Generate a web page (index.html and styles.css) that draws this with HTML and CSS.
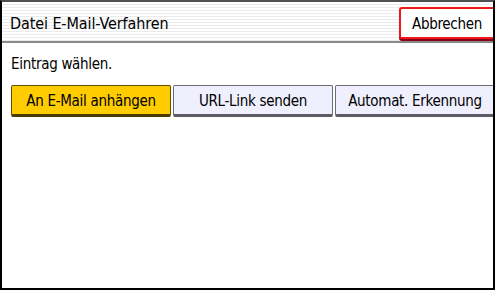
FILE: index.html
```html
<!DOCTYPE html>
<html lang="de">

<head>
  <meta charset="UTF-8" />
  <meta name="viewport" content="width=device-width, initial-scale=1.0" />
  <title>Datei E-Mail-Verfahren</title>
  <link rel="stylesheet" href="styles.css">
</head>

<body>
  <div class="screen">
    <div class="header">
      <div class="title">Datei E-Mail-Verfahren</div>
      <div class="button cancel-button">Abbrechen</div>
    </div>
    <div class="content">
      <div class="prompt">Eintrag wählen.</div>
      <div class="options">
        <div class="button option-button selected">An E-Mail anhängen</div>
        <div class="button option-button">URL-Link senden</div>
        <div class="button option-button">Automat. Erkennung</div>
      </div>
    </div>
  </div>
</body>

</html>
```

FILE: styles.css
```css
* {
  box-sizing: border-box;
}

html,
body {
  width: 100%;
  height: 100%;
}

body {
  margin: 0;
  background: #fff;
  font-family: 'DejaVu Sans Condensed', 'DejaVu Sans', sans-serif;
  font-stretch: condensed;
  font-size: 15px;
  letter-spacing: -0.3px;
  color: #000;
}

.screen {
  width: 495px;
  height: 290px;
  border-top: 2px solid #505050;
  border-left: 2px solid #000;
  border-right: 2px solid #000;
  border-bottom: 2px solid #000;
  display: flex;
  flex-direction: column;
  overflow: hidden;
}

.header {
  height: 41px;
  flex: none;
  display: flex;
  align-items: center;
  justify-content: space-between;
  padding-left: 8px;
  background: repeating-linear-gradient(to bottom, #fff 0 2px, #ebebeb 2px 3px);
  border-bottom: 2px solid #8a8a8a;
}

.title {
  font-size: 16px;
  letter-spacing: -0.1px;
  padding-top: 3px;
}

.button {
  display: flex;
  justify-content: center;
  align-items: center;
  user-select: none;
}

.cancel-button {
  width: 94px;
  height: 32px;
  margin-top: 2px;
  background: #fff;
  border: 2px solid #f01818;
  border-right: none;
  border-radius: 3px 0 0 3px;
  box-shadow: 0 2px 0 #8a0018;
  padding-top: 2px;
}

.content {
  padding: 8px 0 0 9px;
}

.prompt {
  height: 26px;
  padding-top: 4px;
}

.options {
  display: flex;
  gap: 2px;
  margin-top: 8px;
}

.option-button {
  width: 160px;
  height: 32px;
  flex: none;
  background: #efeffd;
  border: 1px solid #6a6a72;
  border-bottom: 3px solid #5c5c66;
  border-radius: 2px;
  padding-top: 1px;
}

.option-button.selected {
  background: #ffcc00;
  border-color: #5e4e00;
  border-bottom-color: #4a3c00;
}
```
